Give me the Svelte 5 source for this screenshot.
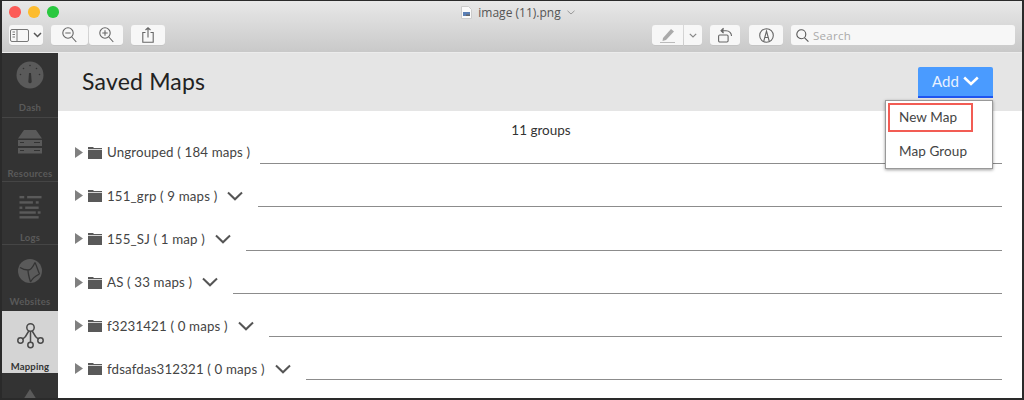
<script>
  const rows = [
    { name: 'Ungrouped ( 184 maps )', menu: false },
    { name: '151_grp ( 9 maps )', menu: true },
    { name: '155_SJ ( 1 map )', menu: true },
    { name: 'AS ( 33 maps )', menu: true },
    { name: 'f3231421 ( 0 maps )', menu: true },
    { name: 'fdsafdas312321 ( 0 maps )', menu: true }
  ];
</script>

<div class="window">
  <div class="titlebar">
    <div class="top">
      <div class="lights"><i class="red"></i><i class="yellow"></i><i class="green"></i></div>
      <div class="title">
        <svg width="11" height="13" viewBox="0 0 11 13"><path d="M.5.5h7l3 3v9H.5z" fill="#fafafa" stroke="#ccc"/><rect x="2" y="6" width="7" height="4" fill="#5a7fb5"/><rect x="5" y="8.5" width="4" height="1.5" fill="#666"/></svg>
        <span>image (11).png</span>
        <svg width="8" height="5" viewBox="0 0 8 5"><path d="M.5.8 4 4 7.500.8" fill="none" stroke="#999"/></svg>
      </div>
    </div>
    <div class="tools">
      <button class="tb sidebtn" aria-label="Sidebar">
        <svg width="19" height="13" viewBox="0 0 19 13" fill="none" stroke="#777"><rect x=".5" y=".5" width="18" height="12" rx="1.500"/><path d="M7 .5v12M2.500 3h2.500M2.500 5.500h2.500M2.500 8h2.500"/></svg>
        <svg width="9" height="6" viewBox="0 0 9 6" fill="none" stroke="#555" stroke-width="1.500"><path d="M1 1l3.500 3.500L8 1"/></svg>
      </button>
      <button class="tb zoom" aria-label="Zoom out">
        <svg width="15" height="16" viewBox="0 0 15 16" fill="none" stroke="#666" stroke-width="1.100"><circle cx="6" cy="6" r="5.200"/><path d="M9.800 10l4.500 5M3.300 6h5.400"/></svg>
      </button>
      <button class="tb zoom second" aria-label="Zoom in">
        <svg width="15" height="16" viewBox="0 0 15 16" fill="none" stroke="#666" stroke-width="1.100"><circle cx="6" cy="6" r="5.200"/><path d="M9.800 10l4.500 5M3.300 6h5.400M6 3.300v5.400"/></svg>
      </button>
      <button class="tb share" aria-label="Share">
        <svg width="12" height="16" viewBox="0 0 12 16" fill="none" stroke="#666" stroke-width="1.100"><path d="M3.500 5.500H.8v9.700h10.400V5.500H8.500M6 10.500V.8M3.500 3 6 .8 8.500 3"/></svg>
      </button>
      <div class="spacer"></div>
      <div class="markup">
        <button class="tb pen" aria-label="Markup">
          <svg width="16" height="15" viewBox="0 0 16 15"><path d="M3 10 11 1l3 2.500L6 12l-3.500 1z" fill="#aaa"/><path d="M0 14.500h15" stroke="#bbb"/></svg>
        </button>
        <button class="tb penmenu" aria-label="Markup menu">
          <svg width="8" height="5" viewBox="0 0 8 5" fill="none" stroke="#888" stroke-width="1.200"><path d="M.8.800 4 4 7.200.800"/></svg>
        </button>
      </div>
      <button class="tb rotate" aria-label="Rotate">
        <svg width="15" height="16" viewBox="0 0 15 16" fill="none" stroke="#666" stroke-width="1.100"><rect x=".6" y="8" width="9.500" height="7" rx="1.200"/><path d="M13.500 9C13.500 6 11.500 3.800 8 3.800H4.500"/><path d="M5.500 1.200 3 3.800l2.500 2.400" fill="#666"/></svg>
      </button>
      <button class="tb markupcircle" aria-label="Annotate">
        <svg width="15" height="15" viewBox="0 0 15 15" fill="none" stroke="#666" stroke-width="1.100"><circle cx="7.500" cy="7.500" r="6.800"/><path d="M4.800 13 7.500 3l2.700 10M5.800 9.500h3.400"/></svg>
      </button>
      <div class="search">
        <svg width="13" height="13" viewBox="0 0 13 13" fill="none" stroke="#555" stroke-width="1.100"><circle cx="5.300" cy="5.300" r="4.500"/><path d="m8.600 8.800 3.800 3.800"/></svg>
        <span>Search</span>
      </div>
    </div>
  </div>

  <div class="main">
    <nav class="side">
      <div class="item dash">
        <svg width="28" height="28" viewBox="0 0 28 28"><circle cx="14" cy="14" r="13.500" fill="#5a5a5a"/><path d="M13 12h2l.7 9a1.800 1.800 0 0 1-3.400 0z" fill="#333"/><g fill="#333"><circle cx="14" cy="4.500" r=".8"/><circle cx="7.500" cy="7.500" r=".8"/><circle cx="20.500" cy="7.500" r=".8"/><circle cx="4.500" cy="13.500" r=".8"/><circle cx="23.500" cy="13.500" r=".8"/></g></svg>
        <span>Dash</span>
      </div>
      <div class="item res">
        <svg width="24" height="24" viewBox="0 0 24 24" fill="#5a5a5a"><path d="M6 0h12l6 8.500H0z"/><rect y="10" width="24" height="6"/><rect y="18" width="24" height="5.500"/><path d="M2 12.500h4M16 12.500h6M2 20.500h4M16 20.500h6" stroke="#333"/></svg>
        <span>Resources</span>
      </div>
      <div class="item logs">
        <svg width="25" height="25" viewBox="0 0 25 25" fill="#5a5a5a"><rect x="1" y="1" width="5" height="2.500"/><rect x="9" y="1" width="15" height="2.500"/><rect x="1" y="6.500" width="14" height="2.500"/><rect x="18" y="6.500" width="3" height="2.500"/><rect x="1" y="12" width="3" height="2.500"/><rect x="7" y="12" width="14" height="2.500"/><rect x="1" y="17" width="17" height="2.500"/><rect x="20" y="17" width="3" height="2.500"/><rect x="1" y="22" width="20" height="2.500"/></svg>
        <span>Logs</span>
      </div>
      <div class="item web">
        <svg width="24" height="24" viewBox="0 0 24 24"><circle cx="12" cy="12" r="12" fill="#5a5a5a"/><path d="M2 8.500C5 10.500 7 11 10 11c3 0 5-3 7-7.500M10 11c0 4 1 7 2.500 12M12.500 23c2-4 5-6 9-8M17 3.500c1.500 3 2.500 7 4.500 11.500" fill="none" stroke="#333" stroke-width="1.300"/></svg>
        <span>Websites</span>
      </div>
      <div class="item active">
        <svg width="27" height="26" viewBox="0 0 27 26" fill="none" stroke="#4a4a4a" stroke-width="1.500"><circle cx="13.500" cy="4.500" r="3.700"/><circle cx="3.500" cy="17.500" r="2.700"/><circle cx="23.500" cy="17.500" r="2.700"/><circle cx="13.500" cy="22" r="2.700"/><path d="M13.500 8.200v11.100M11.800 8 8.500 13.500 5.800 16M15.200 8l3.300 5.500 2.700 2.500"/></svg>
        <span>Mapping</span>
      </div>
      <div class="item alerts">
        <svg width="14" height="11" viewBox="0 0 14 11"><path d="M7 0 14 11H0z" fill="#5a5a5a"/></svg>
      </div>
    </nav>

    <section class="content">
      <header class="head">
        <h1>Saved Maps</h1>
        <button class="add">Add
          <svg width="16" height="10" viewBox="0 0 16 10" fill="none" stroke="#fff" stroke-width="2.500"><path d="M1.200 1.500 8 8l6.800-6.500"/></svg>
        </button>
        <div class="dropdown">
          <div class="opt first">New Map</div>
          <div class="opt">Map Group</div>
        </div>
      </header>
      <div class="count">11 groups</div>
      <div class="list">
        {#each rows as row}
          <div class="row">
            <svg class="caret" width="8" height="11" viewBox="0 0 8 11"><path d="M0 0l8 5.500L0 11z" fill="#808080"/></svg>
            <svg class="folder" width="14" height="13" viewBox="0 0 14 13"><path d="M0 1h5l1 1h8v1.200H0zM0 4h14v9H0z" fill="#595959"/></svg>
            <span class="name">{row.name}</span>
            {#if row.menu}
              <svg class="chev" width="16" height="10" viewBox="0 0 16 10" fill="none" stroke="#555" stroke-width="2"><path d="M1 1.500 8 8.300l7-6.800"/></svg>
            {/if}
            <div class="rule" class:wide={row.menu}></div>
          </div>
        {/each}
      </div>
    </section>
  </div>
</div>

<style>
  :global(body) { margin: 0; background: #222; }
  .window {
    width: 1024px; height: 400px; box-sizing: border-box; overflow: hidden;
    border: solid #2a2a2a; border-width: 1px 2px 2px 2px;
    display: flex; flex-direction: column;
    font-family: Lato, "Open Sans", sans-serif;
  }
  .titlebar {
    height: 52px; flex: none; box-sizing: border-box;
    background: linear-gradient(#e8e8e8, #c9c9c9);
    border-bottom: 1px solid #ececec;
  }
  .top { height: 22px; position: relative; }
  .lights { position: absolute; left: 7px; top: 5px; display: flex; gap: 7.500px; }
  .lights i { width: 11.500px; height: 11.500px; border-radius: 50%; display: block; }
  .red { background: #fc5b57; } .yellow { background: #fdbc2e; } .green { background: #29c83f; }
  .title {
    display: flex; align-items: center; justify-content: center; gap: 6px;
    height: 22px; padding-top: 1px; box-sizing: border-box;
    font: 12px "Open Sans", sans-serif; color: #555;
    margin-left: 12px;
  }
  .tools { display: flex; align-items: center; height: 20px; margin-top: 2px; padding: 0 7px; }
  .tb {
    height: 20px; padding: 0; border: 0; background: #f7f7f7; border-radius: 3px;
    display: flex; align-items: center; justify-content: center; box-shadow: 0 0.500px 0 #bbb;
  }
  .sidebtn { width: 34px; gap: 4px; }
  .zoom { width: 37px; margin-left: 8px; }
  .zoom.second { width: 34px; margin-left: 1px; }
  .share { width: 34px; margin-left: 8px; }
  .spacer { flex: 1; }
  .markup { display: flex; gap: 1px; }
  .pen { width: 31px; border-radius: 3px 0 0 3px; }
  .penmenu { width: 18px; border-radius: 0 3px 3px 0; }
  .rotate { width: 30px; margin-left: 8px; }
  .markupcircle { width: 34px; margin-left: 9px; }
  .search {
    width: 224px; height: 20px; margin-left: 8px; background: #f7f7f7; border-radius: 3px;
    display: flex; align-items: center; gap: 4px; padding-left: 5px; box-sizing: border-box;
    font: 11.500px "Open Sans", sans-serif; color: #aaa; letter-spacing: 0.300px;
  }
  .main { flex: 1; display: flex; min-height: 0; }
  .side { width: 56px; flex: none; background: #333; color: #5a5a5a; }
  .item {
    display: flex; flex-direction: column; align-items: center; box-sizing: border-box;
    border-bottom: 1px solid #454545; font-size: 9.500px; font-weight: 700; letter-spacing: 0.200px;
  }
  .item span { display: block; line-height: 12px; }
  .dash { height: 65px; padding-top: 8px; gap: 13px; }
  .res { height: 64px; padding-top: 12px; gap: 14px; }
  .logs { height: 63px; padding-top: 13px; gap: 13px; }
  .web { height: 66px; padding-top: 14px; gap: 13px; border-bottom: 0; }
  .active { height: 62px; background: #d4d4d4; color: #333; padding-top: 12px; gap: 12px; border-bottom: 0; }
  .alerts { padding-top: 16px; border-bottom: 0; }
  .content { flex: 1; min-width: 0; background: #fff; display: flex; flex-direction: column; }
  .head {
    height: 58px; flex: none; background: #e5e5e5; position: relative;
    display: flex; align-items: center; justify-content: space-between;
    padding: 0 29px 0 24px;
  }
  h1 { margin: 0; font-size: 23px; font-weight: 400; color: #222; letter-spacing: 0.200px; position: relative; top: -1px; }
  .add {
    width: 75px; height: 31px; box-sizing: border-box; padding: 0 0 1px 0; border: 0;
    border-bottom: 2px solid #1f55f0; border-radius: 2px 2px 0 0;
    background: #4a9bff; color: #e8f1ff; font: 400 15px Lato, sans-serif;
    display: flex; align-items: center; justify-content: center; gap: 4px;
    position: relative; top: 0.500px;
  }
  .dropdown {
    position: absolute; left: 827px; top: 47px; width: 108px; height: 69px; box-sizing: border-box;
    background: #fff; border: 1px solid #999; box-shadow: 0 1px 3px rgba(0,0,0,.4);
    color: #444; font-size: 13.500px; z-index: 2; padding: 2px 2px 0 2px;
  }
  .opt { height: 29px; line-height: 29px; padding-left: 11px; box-sizing: border-box; margin-top: 5px; letter-spacing: 0.100px; }
  .opt.first { width: 85px; margin-top: 0; border: 2px solid #f25c54; line-height: 25px; padding-left: 9px; }
  .count { height: 16px; margin-top: 11px; text-align: center; font-size: 13.500px; line-height: 16px; color: #333; margin-left: 2px; flex: none; }
  .list { margin-top: -7.300px; padding: 0 20px 0 17px; }
  .row { height: 43.300px; display: flex; align-items: center; font-size: 13.300px; color: #444; position: relative; }
  .caret { margin-right: 5px; flex: none; }
  .folder { margin-right: 5px; flex: none; }
  .name { white-space: pre; letter-spacing: 0.150px; }
  .chev { margin-left: 10px; flex: none; }
  .rule { flex: 1; height: 1px; background: #8c8c8c; margin-left: 10px; align-self: flex-end; margin-bottom: 10px; }
  .rule.wide { margin-left: 15px; }
</style>
